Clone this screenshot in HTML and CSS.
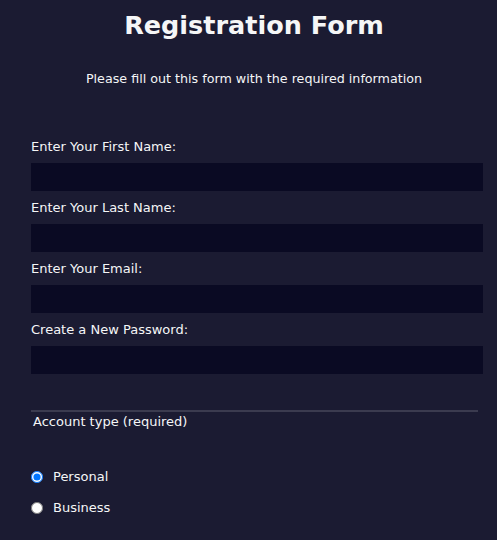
FILE: index.html
```html
<!DOCTYPE html>
<html>
<head>
<meta charset="utf-8">
<link rel="stylesheet" href="styles.css">
</head>
<body>
<h1 class="title">Registration Form</h1>
<p class="subtitle">Please fill out this form with the required information</p>
<form class="form">
  <div class="fields">
    <label class="label">Enter Your First Name:</label>
    <div class="input"></div>
    <label class="label">Enter Your Last Name:</label>
    <div class="input"></div>
    <label class="label">Enter Your Email:</label>
    <div class="input"></div>
    <label class="label">Create a New Password:</label>
    <div class="input"></div>
  </div>
  <div class="account">
    <div class="legend">Account type (required)</div>
    <div class="radios">
      <label class="radio-row"><input class="radio" type="radio" name="acct" checked> Personal</label>
      <label class="radio-row"><input class="radio" type="radio" name="acct"> Business</label>
    </div>
  </div>
</form>
</body>
</html>
```
FILE: styles.css
```css
html, body {
  margin: 0;
  padding: 0;
  background: #1b1b32;
  color: #f5f6f7;
  font-family: "DejaVu Sans", Tahoma, sans-serif;
}
.title {
  margin: 0;
  padding: 8px 0 0 11px;
  text-align: center;
  font-size: 25.5px;
  line-height: 34px;
  font-weight: bold;
}
.subtitle {
  margin: 0;
  padding: 28px 0 0 11px;
  text-align: center;
  font-size: 12.7px;
  line-height: 18px;
}
.form {
  padding: 0 14px 0 31px;
  margin-top: 42px;
}
.fields {
  display: flex;
  flex-direction: column;
  padding-bottom: 36px;
  margin-right: 5px;
  border-bottom: 2px solid #3b3b4f;
}
.label {
  display: block;
  font-size: 13px;
  line-height: 18px;
  margin: 8px 0 7px;
}
.input {
  height: 28px;
  background: #0a0a23;
  margin-right: -5px;
}
.legend {
  font-size: 13px;
  line-height: 18px;
  padding: 1px 0 0 2px;
}
.radios {
  display: flex;
  flex-direction: column;
  gap: 13px;
  margin-top: 37px;
}
.radio-row {
  display: flex;
  align-items: center;
  font-size: 13px;
  line-height: 18px;
  gap: 10px;
}
.radio {
  margin: 0;
  width: 12px;
  height: 12px;
}
```
